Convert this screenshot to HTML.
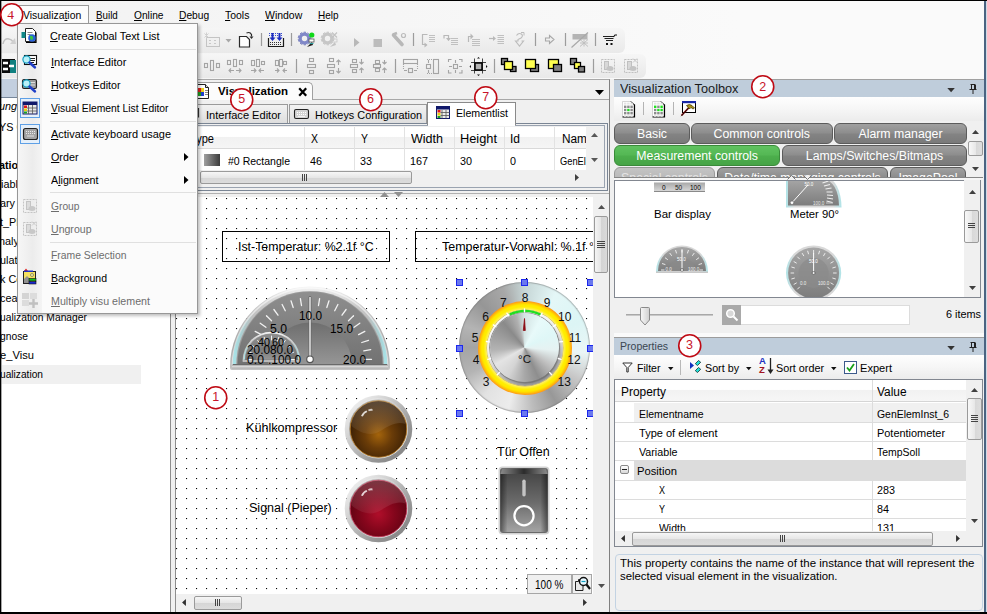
<!DOCTYPE html>
<html><head><meta charset="utf-8"><title>Visualization</title>
<style>
html,body{margin:0;padding:0;}
body{width:987px;height:614px;overflow:hidden;position:relative;background:#f0f0f0;font-family:"Liberation Sans",sans-serif;font-size:12px;color:#000;}
.a{position:absolute;}
.t{transform-origin:0 50%;position:absolute;white-space:nowrap;line-height:16px;height:16px;}
u{text-decoration:underline;text-underline-offset:1px;}
svg{position:absolute;overflow:visible;}
.tb{position:absolute;height:20.400px;box-sizing:border-box;border:1px solid #5c5c5c;border-radius:6px;background:linear-gradient(#a0a0a0,#8e8e8e 45%,#838383 55%,#7a7a7a);color:#fff;font-size:12.3px;line-height:20px;text-align:center;white-space:nowrap;}
.tb.g{background:linear-gradient(#60c260,#55b855 45%,#4cae4c 55%,#46a446);border-color:#3a8a3a;}
.tb.d{background:linear-gradient(#c4c4c4,#b0b0b0);border-color:#999;color:#e4e4e4;}
.an{position:absolute;width:23.5px;height:23.5px;color:#c8142a;font-size:12.5px;line-height:23.5px;text-align:center;}
.an svg{left:0;top:0;}
.an span{position:absolute;left:0;top:.5px;width:23.5px;text-align:center;}
.pn{position:absolute;width:20px;height:16px;line-height:16px;text-align:center;font-size:12px;color:#111;}
.hd{position:absolute;width:7px;height:7px;box-sizing:border-box;border:1px solid #1c28ee;background:#6a78ee;}
</style></head>
<body>
<!-- top region background -->
<div class="a" style="left:0;top:0;width:987px;height:80px;background:linear-gradient(90deg,#f3f3f3,#f6f6f6 40%,#fafafa 75%)"></div>
<!-- menu bar -->

<!-- toolbar strips -->
<div class="a" style="left:1px;top:28px;width:624px;height:25px;background:linear-gradient(#f6f6f6,#eeeeee 60%,#e9e9e9);border-radius:0 6px 6px 0"></div>
<div class="a" style="left:1px;top:54px;width:645px;height:24px;background:linear-gradient(#f6f6f6,#eeeeee 60%,#e9e9e9);border-radius:0 6px 6px 0"></div>
<!-- menu bar items -->
<div class="a" style="left:17px;top:5px;width:72px;height:19px;border:1px solid #9a9a9a;border-bottom:none;background:#fcfcfc;box-sizing:border-box"></div>
<span class="t" style="left:22.7px;top:7px;font-size:11.5px;transform:scaleX(0.905);">Visualiza<u>t</u>ion</span>
<span class="t" style="left:96.4px;top:7px;font-size:11.5px;transform:scaleX(0.852);"><u>B</u>uild</span>
<span class="t" style="left:133.5px;top:7px;font-size:11.5px;transform:scaleX(0.887);"><u>O</u>nline</span>
<span class="t" style="left:178.8px;top:7px;font-size:11.5px;transform:scaleX(0.891);"><u>D</u>ebug</span>
<span class="t" style="left:225px;top:7px;font-size:11.5px;transform:scaleX(0.908);"><u>T</u>ools</span>
<span class="t" style="left:264.7px;top:7px;font-size:11.5px;transform:scaleX(0.911);"><u>W</u>indow</span>
<span class="t" style="left:317.7px;top:7px;font-size:11.5px;transform:scaleX(0.866);"><u>H</u>elp</span>
<!-- toolbar icons row 1 (center y=40.500) -->
<svg style="left:0;top:0" width="987" height="80">
<g fill="none" stroke="#b4b4b4" stroke-width="1">
 <!-- redo (left, partially hidden) -->
 <path d="M3 44q1-6 6-5q3 .5 4 3" stroke="#c0c0c0" stroke-width="1.500"/><path d="M10 44l6 0l-1-6z" fill="#d0d0d0" stroke="none"/>
 <!-- new element disabled -->
 <rect x="206.500" y="37.500" width="13" height="9" stroke="#c4c4c4"/><path d="M209 40.500h2M214 40.500h2M209 43.500h2M214 43.500h2" stroke="#c8c8c8"/><path d="M204.500 33.500l4 4M208.500 33.500l-4 4M206.500 32.500v6" stroke="#d0d0d0"/>
 <path d="M225.500 39h6l-3 3.500z" fill="#a8a8a8" stroke="none"/>
 <!-- page with arrow -->
 <path d="M239.500 36.500h7l3 3v7.500h-10z" fill="#fff" stroke="#2a2a2a" stroke-width="1.200"/><path d="M246.500 33q3.500-1.500 5 1.500v2" stroke="#2a2a2a" stroke-width="1.200"/><path d="M249.500 36.500l2 2.500l2-2.500z" fill="#2a2a2a" stroke="none"/>
 <path d="M261.500 33v13M291.500 33v13M413.500 33v13M535.500 33v13M565.500 33v13M595.500 33v13" stroke="#9c9c9c" stroke-width="1.200"/>
 <!-- download -->
 <path d="M269 33.500h14M269 35.500h14" stroke="#3a50d0" stroke-dasharray="1 1"/><path d="M272.500 33v5M279.500 33v5" stroke="#1c2cc0" stroke-width="2"/><path d="M269.500 37.500h6l-3 3.500zM276.500 37.500h6l-3 3.500z" fill="#1c2cc0" stroke="none"/>
 <path d="M268.500 38v8.500h15v-8.500" stroke="#1a1a1a" stroke-width="1.200"/><path d="M270 42.500h12M270 44.500h12" stroke="#333" stroke-dasharray="1 1"/>
 <!-- gear green -->
 <circle cx="304.500" cy="38.500" r="4.300" stroke="#8088c8" stroke-width="3.200"/><circle cx="304.500" cy="38.500" r="6.300" stroke="#6870b8" stroke-width="1" stroke-dasharray="2.500 1.500"/>
 <circle cx="311.800" cy="35" r="2.600" fill="#10d818" stroke="none"/><rect x="309" y="39" width="5" height="3" fill="#fff" stroke="#555" stroke-width=".8"/><path d="M307 47l5-5l1 3z" fill="#222" stroke="none"/><path d="M309.500 43.500h4" stroke="#30a0a0"/>
 <!-- gear disabled -->
 <circle cx="327.500" cy="38.500" r="4.300" stroke="#c6c6c6" stroke-width="3.200"/><circle cx="327.500" cy="38.500" r="6.300" stroke="#c0c0c0" stroke-width="1" stroke-dasharray="2.500 1.500"/>
 <path d="M332 32.500l5 5M337 32.500l-5 5" stroke="#c4c4c4" stroke-width="1.300"/><rect x="332" y="39" width="5" height="3" stroke="#c8c8c8" stroke-width=".8"/><path d="M330 47l5-5l1 3z" fill="#c4c4c4" stroke="none"/>
 <!-- play / stop -->
 <path d="M354 38l5.500 4.500l-5.500 4.500z" fill="#b8b8b8" stroke="none"/>
 <rect x="373.500" y="39" width="8.500" height="8" fill="#bcbcbc" stroke="none"/>
 <!-- wrench -->
 <path d="M393.500 35l8.500 9.500" stroke="#b8b8b8" stroke-width="3.600" stroke-linecap="round"/><path d="M393 34.500l4-1.500" stroke="#b8b8b8" stroke-width="2.500"/><circle cx="403.500" cy="35.500" r="2" stroke="#bcbcbc" stroke-width="1.200"/>
 <!-- step into -->
 <path d="M427.500 34.500h-5v10h4" stroke="#b8b8b8" stroke-width="1.200"/><path d="M424.500 42.500l3 2.500l-3 2.500" fill="#b8b8b8" stroke="none"/><path d="M429 35.500h6M429 37.500h6M429 39.500h6M429 41.500h6" stroke="#c0c0c0"/>
 <!-- step over -->
 <path d="M448.500 40.500v-5h-4.500v3" stroke="#b8b8b8" stroke-width="1.200"/><path d="M446 38l2.500 3l2.500-3z" fill="#b8b8b8" stroke="none"/><path d="M451 38.500h7M451 40.500h7M451 42.500h7M451 44.500h7" stroke="#c0c0c0"/>
 <!-- step out -->
 <path d="M468.500 42v-5.500h3" stroke="#b8b8b8" stroke-width="1.200"/><path d="M470.500 33.500l3 3l-3 3z" fill="#b8b8b8" stroke="none"/><path d="M472 39.500h8M472 41.500h8M472 43.500h8M472 45.500h8" stroke="#c0c0c0"/>
 <!-- run to cursor -->
 <path d="M489 38.500h5" stroke="#b8b8b8" stroke-width="1.200"/><path d="M493 36l3 2.500l-3 2.500z" fill="#b8b8b8" stroke="none"/><path d="M497.500 35.500h6.500M497.500 37.500h6.500M497.500 39.500h6.500M497.500 41.500h6.500M497.500 43.500h6.500" stroke="#c0c0c0"/>
 <!-- curvy arrow -->
 <path d="M516.500 35.500q2-3 5-1.500q2 2-.5 4l-3 1.500v1.500h-2.500l4 5l4-5h-2" stroke="#bcbcbc" stroke-width="1.100"/><path d="M521 32.500l3 0l0 3" stroke="#bcbcbc"/>
 <!-- arrow outline -->
 <path d="M545.500 38h4v-2.500l4.500 4l-4.500 4v-2.500h-4z" stroke="#a8a8a8" stroke-width="1.100"/>
 <!-- flag disabled -->
 <rect x="572.500" y="34" width="15" height="5.500" fill="#b4b4b4" stroke="none"/><path d="M580 39.500l8 7M584 39.500v7M580 43h8M588 39.500l-8 7" stroke="#c0c0c0"/><path d="M571.500 47.500l16.500-15" stroke="#a8a8a8" stroke-width="1.200"/>
 <!-- cart -->
 <path d="M603 36.500h11M604.500 38.500h9M606 40.500h7" stroke="#222" stroke-width="1"/><path d="M613.500 37l1.500-2h2" stroke="#111" stroke-width="1.100"/><rect x="606" y="43" width="2" height="2" fill="#111" stroke="none"/><rect x="610.500" y="43" width="2" height="2" fill="#111" stroke="none"/>
</g>
<!-- row 2 (center y=66) -->
<g fill="none" stroke="#a4a4a4" stroke-width="1.100">
 <!-- left hidden icon -->
 <rect x="2" y="59" width="13" height="14" fill="#0a0a0a" stroke="none"/><rect x="10" y="60" width="6" height="13" fill="#108080" stroke="none"/><path d="M3 63h5M3 69h5M9 66h5" stroke="#fff" stroke-width="2.500"/>
 <rect x="204.500" y="63.500" width="3" height="4"/><rect x="210.500" y="60.500" width="3" height="10"/><rect x="216.500" y="63.500" width="3" height="4"/>
 <rect x="227.500" y="60.500" width="3" height="4"/><rect x="233.500" y="59.500" width="3" height="7"/><rect x="239.500" y="60.500" width="3" height="4"/><path d="M229 70.500h5M236 70.500h5M231 68.500l-2 2l2 2M239 68.500l2 2l-2 2"/>
 <rect x="251.500" y="60.500" width="3" height="5"/><rect x="256.500" y="59.500" width="3" height="7"/><rect x="261.500" y="61.500" width="3" height="3"/><path d="M251 70.500h5M259 70.500h5M254 68.500l2 2l-2 2M261 68.500l-2 2l2 2"/>
 <rect x="275.500" y="60.500" width="3" height="5"/><rect x="279.500" y="59.500" width="3" height="7"/><rect x="283.500" y="61.500" width="3" height="3"/><path d="M275 70.500h4M283 70.500h4M277 68.500l2 2l-2 2M285 68.500l-2 2l2 2"/>
 <path d="M296.500 59v14M395.500 59v14M494.500 59v14M593.500 59v14" stroke="#9c9c9c" stroke-width="1.200"/>
 <rect x="309.500" y="58.500" width="4" height="3"/><rect x="307.500" y="64.500" width="8" height="3"/><rect x="309.500" y="70.500" width="4" height="3"/>
 <rect x="329.500" y="58.500" width="4" height="3"/><rect x="327.500" y="64.500" width="7" height="3"/><rect x="329.500" y="70.500" width="4" height="3"/><path d="M338.500 60v5M338.500 68v5M336.500 62l2-2l2 2M336.500 71l2 2l2-2"/>
 <rect x="352.500" y="59.500" width="4" height="3"/><rect x="350.500" y="64.500" width="7" height="3"/><rect x="352.500" y="69.500" width="4" height="3"/><path d="M361.500 59v5M361.500 68v5M359.500 62l2 2l2-2M359.500 70l2-2l2 2"/>
 <rect x="375.500" y="60.500" width="4" height="3"/><rect x="373.500" y="64.500" width="7" height="3"/><rect x="375.500" y="68.500" width="4" height="3"/><path d="M384.500 60v4M384.500 68v5M382.500 62l2 2l2-2M382.500 70l2-2l2 2"/>
 <rect x="403.500" y="59.500" width="14" height="4"/><rect x="408.500" y="68.500" width="4" height="4"/><path d="M403.500 64v6M417.500 64v6" stroke-dasharray="1 1"/><path d="M404 70.500h3M414 70.500h3"/>
 <rect x="433.500" y="59.500" width="5" height="14"/><rect x="426.500" y="64.500" width="4" height="4"/><path d="M427 59.500h6M427 73.500h6" stroke-dasharray="1 1"/><path d="M428.500 60v3M428.500 70v3"/>
 <path d="M448.500 62v-2.500h3M459 59.500h3v2.500M462 70v3h-3M451.500 73h-3v-3" /><rect x="453.500" y="64.500" width="4" height="4"/><path d="M455.500 60v3M455.500 70v3M449 66.500h3M459 66.500h3"/>
 <!-- fit frame (enabled) -->
 <path d="M474.500 58.500v15M482.500 58.500v15M471 62.500h15M471 70.500h15" stroke="#333" stroke-width=".9"/><rect x="475" y="63" width="7" height="7" fill="#b4b4b4" stroke="#000" stroke-width="1.500"/><path d="M477 58.500h3l-1.500-1.500zM477 74.500h3l-1.500 1.500zM471 65v3l-1.500-1.500zM486 65v3l1.500-1.500z" fill="#111" stroke="none"/>
</g>
<!-- order icons -->
<g stroke="#000" stroke-width="1.300">
 <rect x="501.500" y="58.500" width="6" height="6" fill="#808080"/><rect x="510.500" y="66.500" width="5.500" height="5" fill="#808080"/><rect x="504.500" y="61.500" width="8" height="8" fill="#ffff50"/>
 <rect x="530.500" y="64.500" width="8" height="7" fill="#808080"/><rect x="525.500" y="59.500" width="10" height="9" fill="#ffff50"/>
 <rect x="548.500" y="59.500" width="10" height="9" fill="#ffff50"/><rect x="553.500" y="64.500" width="8" height="7" fill="#808080"/>
 <rect x="570.500" y="58.500" width="6" height="6" fill="#808080"/><rect x="574.500" y="62.500" width="6" height="6" fill="#ffff50"/><rect x="578.500" y="66.500" width="6" height="5.500" fill="#808080"/>
</g>
<!-- group / ungroup disabled -->
<g fill="none" stroke="#c0c0c0">
 <rect x="601.500" y="59.500" width="13" height="13" stroke-dasharray="2 1"/><rect x="604.500" y="61.500" width="4" height="8" fill="#d8d8d8"/><ellipse cx="610" cy="68.500" rx="3.500" ry="2.500" fill="#c4c4c4" stroke="none"/>
 <rect x="624.500" y="59.500" width="13" height="13" stroke-dasharray="2 1"/><rect x="627.500" y="61.500" width="4" height="8" fill="#d8d8d8"/><ellipse cx="633" cy="68.500" rx="3.500" ry="2.500" fill="#c4c4c4" stroke="none"/><path d="M633 58.500l4 4M637 58.500l-4 4" stroke="#c8c8c8"/>
</g>
</svg>
<!-- left panel -->
<div class="a" style="left:1px;top:79px;width:170px;height:533px;background:#fff"></div>
<div class="a" style="left:1px;top:79px;width:170px;height:18px;background:#c3cfdf"></div><div class="a" style="left:1px;top:97px;width:170px;height:1px;background:#76869a"></div>
<div class="a" style="left:2px;top:365px;width:139px;height:19px;background:#f0f0f0"></div>
<span class="t" style="left:-1px;top:98px;font-size:11.5px;transform:scaleX(0.94);font-style:italic">ung</span>
<span class="t" style="left:-1px;top:119px;font-size:11.5px;transform:scaleX(0.94);">YS C</span>
<span class="t" style="left:-1px;top:157px;font-size:11.5px;transform:scaleX(0.94);font-weight:bold">ation</span>
<span class="t" style="left:1px;top:176px;font-size:11.5px;transform:scaleX(0.94);">iable</span>
<span class="t" style="left:0px;top:195px;font-size:11.5px;transform:scaleX(0.94);">ary</span>
<span class="t" style="left:0px;top:214px;font-size:11.5px;transform:scaleX(0.94);">t_PRG</span>
<span class="t" style="left:-1px;top:233px;font-size:11.5px;transform:scaleX(0.94);">nalyse</span>
<span class="t" style="left:0px;top:252px;font-size:11.5px;transform:scaleX(0.94);">ulation</span>
<span class="t" style="left:0px;top:271px;font-size:11.5px;transform:scaleX(0.94);">k Config</span>
<span class="t" style="left:0px;top:290px;font-size:11.5px;transform:scaleX(0.94);">ceanu</span>
<span class="t" style="left:0px;top:309px;font-size:11.5px;transform:scaleX(0.895);">ualization Manager</span>
<span class="t" style="left:0px;top:328px;font-size:11.5px;transform:scaleX(0.893);">gnose</span>
<span class="t" style="left:0px;top:347px;font-size:11.5px;transform:scaleX(0.972);">e_Visu</span>
<span class="t" style="left:0px;top:366px;font-size:11.5px;transform:scaleX(0.885);">ualization</span>
<!-- splitter left/center -->
<div class="a" style="left:170px;top:79px;width:1px;height:533px;background:#8e8e8e"></div>
<div class="a" style="left:171px;top:79px;width:4px;height:533px;background:#f0f0f0"></div>
<!-- center frame -->
<div class="a" style="left:175px;top:79px;width:435px;height:533px;background:#f0f0f0;border-top:1px solid #a8a8a8;border-left:1px solid #8e8e8e;border-right:1px solid #808080;box-sizing:border-box"></div>
<!-- doc tab -->
<div class="a" style="left:176px;top:99px;width:433px;height:1px;background:#a8a8a8"></div>
<div class="a" style="left:190px;top:82px;width:123px;height:18px;background:#fcfcfc;border:1px solid #a0a0a0;border-bottom:none;border-radius:0 5px 0 0;box-sizing:border-box"></div>
<svg style="left:196px;top:83px" width="14" height="16" viewBox="0 0 14 16"><path d="M1.500 1.500h8l3 3v11h-11z" fill="#fff" stroke="#222" stroke-width="1"/><path d="M9.500 1.500v3h3" fill="#ddd" stroke="#222" stroke-width="1"/><rect x="2" y="5" width="3" height="4" fill="#e02020"/><rect x="5" y="5" width="3" height="4" fill="#f0d020"/><rect x="2" y="9" width="3" height="4" fill="#20a020"/><rect x="5" y="9" width="3" height="4" fill="#2040d0"/><path d="M9 7.500h3M9 9.500h3M9 11.500h3" stroke="#888" stroke-width="1"/></svg>
<span class="t" style="left:218px;top:83px;font-size:11.5px;transform:scaleX(0.999);font-weight:bold">Visualization</span>
<svg style="left:298px;top:87px" width="10" height="10" viewBox="0 0 10 10"><path d="M1.2 1.2L8.2 8.8M8.2 1.2L1.2 8.8" stroke="#000" stroke-width="2.2"/></svg>
<svg style="left:595px;top:90px" width="10" height="6" viewBox="0 0 10 6"><path d="M0 0h9L4.5 5z" fill="#000"/></svg>
<!-- sub tabs -->
<div class="a" style="left:176px;top:104px;width:112px;height:20px;background:linear-gradient(#f2f2f2,#dedede);border:1px solid #9a9a9a;box-sizing:border-box"></div>
<div class="a" style="left:289px;top:104px;width:138px;height:20px;background:linear-gradient(#f2f2f2,#dedede);border:1px solid #9a9a9a;box-sizing:border-box"></div>
<span class="t" style="left:206px;top:107px;font-size:11.5px;transform:scaleX(0.962);">Interface Editor</span>
<span class="t" style="left:315px;top:107px;font-size:11.5px;transform:scaleX(0.946);">Hotkeys Configuration</span>
<!-- content frame -->
<div class="a" style="left:176px;top:123px;width:432px;height:68px;background:#f0f0f0;border:1px solid #7a8594;border-left:none;box-sizing:border-box"></div>
<div class="a" style="left:176px;top:125px;width:429px;height:63px;background:#f0f0f0;border:1px solid #9aa3b0;border-left:none;box-sizing:border-box"></div>
<!-- selected tab -->
<div class="a" style="left:427px;top:102px;width:89px;height:23px;background:#fff;border:1px solid #8a8a8a;border-bottom:none;box-sizing:border-box"></div>
<div class="a" style="left:428px;top:123px;width:87px;height:3px;background:#fff"></div>
<span class="t" style="left:456px;top:105px;font-size:11.5px;transform:scaleX(0.924);">Elementlist</span>
<!-- table -->
<div class="a" style="left:176px;top:127px;width:411px;height:43px;background:#fff"></div>
<div class="a" style="left:176px;top:127px;width:411px;height:22px;background:linear-gradient(#fff 0,#fff 45%,#f1f1f1 50%,#f5f5f5 100%);border-bottom:1px solid #d9d9d9;box-sizing:border-box"></div>
<div class="a" style="left:304px;top:127px;width:1px;height:43px;background:#e2e2e2"></div>
<div class="a" style="left:354px;top:127px;width:1px;height:43px;background:#e2e2e2"></div>
<div class="a" style="left:404px;top:127px;width:1px;height:43px;background:#e2e2e2"></div>
<div class="a" style="left:454px;top:127px;width:1px;height:43px;background:#e2e2e2"></div>
<div class="a" style="left:504px;top:127px;width:1px;height:43px;background:#e2e2e2"></div>
<div class="a" style="left:554px;top:127px;width:1px;height:43px;background:#e2e2e2"></div>
<span class="t" style="left:190px;top:131px;font-size:12px;transform:scaleX(0.923);">Type</span>
<span class="t" style="left:311px;top:131px;font-size:12px;transform:scaleX(0.873);">X</span>
<span class="t" style="left:361px;top:131px;font-size:12px;transform:scaleX(0.873);">Y</span>
<span class="t" style="left:411px;top:131px;font-size:12px;transform:scaleX(1.043);">Width</span>
<span class="t" style="left:460px;top:131px;font-size:12px;transform:scaleX(1.067);">Height</span>
<span class="t" style="left:510px;top:131px;font-size:12px;transform:scaleX(0.998);">Id</span>
<span class="t" style="left:561.5px;top:131px;font-size:12px;transform:scaleX(0.984);">Name</span>
<div class="a" style="left:204px;top:154px;width:16px;height:12px;background:linear-gradient(90deg,#a0a0a0,#3c3c3c)"></div>
<span class="t" style="left:228px;top:153px;font-size:11.5px;transform:scaleX(0.915);">#0 Rectangle</span>
<span class="t" style="left:310px;top:153px;font-size:11.5px;transform:scaleX(0.938);">46</span>
<span class="t" style="left:360px;top:153px;font-size:11.5px;transform:scaleX(0.938);">33</span>
<span class="t" style="left:410px;top:153px;font-size:11.5px;transform:scaleX(0.938);">167</span>
<span class="t" style="left:460px;top:153px;font-size:11.5px;transform:scaleX(0.938);">30</span>
<span class="t" style="left:510px;top:153px;font-size:11.5px;transform:scaleX(0.937);">0</span>
<div class="a" style="left:555px;top:127px;width:31px;height:43px;overflow:hidden"><span class="t" style="left:4.500px;top:26px;font-size:11.500px;transform:scaleX(.81)">GenElemInst_0</span></div>
<!-- table scrollbars -->
<div class="a" style="left:586px;top:127px;width:16px;height:43px;background:#f0f0f0"></div>
<svg style="left:591px;top:133px" width="7" height="4" viewBox="0 0 7 4"><path d="M0 4L3.500 0L7 4z" fill="#585858"/></svg>
<svg style="left:591px;top:158px" width="7" height="4" viewBox="0 0 7 4"><path d="M0 0L3.500 4L7 0z" fill="#585858"/></svg>
<div class="a" style="left:176px;top:170px;width:426px;height:15px;background:#f0f0f0"></div>
<div class="a" style="left:200px;top:171px;width:212px;height:13px;background:linear-gradient(#f6f6f6,#e6e6e6 50%,#d6d6d6 52%,#dcdcdc);border:1px solid #9a9a9a;border-radius:2px;box-sizing:border-box"></div>
<div class="a" style="left:302px;top:174px;width:1px;height:7px;background:#444;box-shadow:2px 0 0 #444,4px 0 0 #444"></div>
<svg style="left:575px;top:174px" width="4" height="7" viewBox="0 0 4 7"><path d="M0 0L4 3.500L0 7z" fill="#404040"/></svg>
<!-- splitter -->
<div class="a" style="left:176px;top:193px;width:433px;height:1px;background:#b0b0b0"></div>
<svg style="left:376px;top:192px" width="34" height="5" viewBox="0 0 34 5"><path d="M4 5L8.500 0L13 5z" fill="#909090"/><path d="M18 0L22.5 5L27 0z" fill="#909090"/></svg>
<!-- sub tab icons -->
<svg style="left:170px;top:100px" width="280" height="26">
<rect x="124.500" y="9.500" width="14" height="9" rx="1.500" fill="#d4d4d4" stroke="#222" stroke-width="1.100"/><path d="M127 12.500h9M127 14.500h9" stroke="#fff" stroke-width="1" stroke-dasharray="1 1"/><path d="M128 16.500h7" stroke="#f4f4f4" stroke-width="1"/>
<rect x="266.500" y="6.500" width="13" height="12" fill="#ececec" stroke="#10186a" stroke-width="1"/><rect x="266.500" y="6.500" width="13" height="3" fill="#10186a"/>
<rect x="267.500" y="10" width="3" height="2.500" fill="#e01818"/><rect x="267.500" y="13" width="3" height="2.500" fill="#e8d010"/><rect x="267.500" y="16" width="3" height="2" fill="#18a028"/>
<path d="M272 10v8.500M276 10v8.500M270.500 12.500h9M270.500 15.500h9" stroke="#555" stroke-width=".8"/>
<path d="M28.300 8v9.500" stroke="#333" stroke-width="1.600"/>
</svg>
<!-- canvas -->
<div class="a" style="left:176px;top:197px;width:417px;height:397px;background:#fff;overflow:hidden">
<div class="a" style="left:-176px;top:-197px;width:987px;height:614px">
<svg style="left:0;top:0" width="987" height="614"><defs><pattern id="dots" x="176" y="198" width="10" height="10" patternUnits="userSpaceOnUse"><rect x="0" y="0" width="1.1" height="1.1" fill="#000"/></pattern></defs><rect x="176" y="197" width="420" height="400" fill="url(#dots)"/></svg>
<!-- rectangles -->
<div class="a" style="left:222px;top:231px;width:168px;height:31px;border:1px solid #000;box-sizing:border-box"></div>
<div class="a" style="left:415px;top:231px;width:190px;height:31px;border:1px solid #000;box-sizing:border-box"></div>
<span class="t" style="left:237.6px;top:239px;font-size:12px;transform:scaleX(1.031);">Ist-Temperatur: %2.1f °C</span>
<span class="t" style="left:441.6px;top:239px;font-size:12px;transform:scaleX(1.040);">Temperatur-Vorwahl: %.1f °C</span>
<span class="t" style="left:246px;top:420px;font-size:12px;transform:scaleX(1.052);">Kühlkompressor</span>
<span class="t" style="left:248.7px;top:500px;font-size:12px;transform:scaleX(1.043);">Signal (Pieper)</span>
<span class="t" style="left:496.8px;top:444px;font-size:12px;transform:scaleX(1.042);">Tür Offen</span>
<!--METER-->
<!--POTI-->
<!--LAMPS-->
<!--SWITCH-->
</div></div>
<!-- canvas scrollbars -->
<div class="a" style="left:593px;top:197px;width:16px;height:397px;background:#f0f0f0"></div>
<svg style="left:598px;top:204.5px" width="7" height="4" viewBox="0 0 9 5"><path d="M0 5L4.5 0L9 5z" fill="#505050"/></svg>
<div class="a" style="left:594px;top:216px;width:14px;height:57px;background:linear-gradient(90deg,#f4f4f4,#e4e4e4 50%,#d4d4d4 52%,#dadada);border:1px solid #9a9a9a;border-radius:2px;box-sizing:border-box"></div>
<div class="a" style="left:597px;top:241px;width:8px;height:1px;background:#444;box-shadow:0 2px 0 #444,0 4px 0 #444,0 6px 0 #444"></div>
<svg style="left:598px;top:583.5px" width="7" height="4" viewBox="0 0 9 5"><path d="M0 0L4.5 5L9 0z" fill="#505050"/></svg>
<div class="a" style="left:176px;top:594px;width:433px;height:18px;background:#f0f0f0"></div>
<svg style="left:181.5px;top:599px" width="4" height="7" viewBox="0 0 5 9"><path d="M5 0L0 4.5L5 9z" fill="#303030"/></svg>
<div class="a" style="left:194px;top:596px;width:48px;height:14px;background:linear-gradient(#f6f6f6,#e6e6e6 50%,#d6d6d6 52%,#dcdcdc);border:1px solid #9a9a9a;border-radius:2px;box-sizing:border-box"></div>
<div class="a" style="left:215px;top:599px;width:1px;height:7px;background:#444;box-shadow:2px 0 0 #444,4px 0 0 #444"></div>
<svg style="left:582.5px;top:599px" width="4" height="7" viewBox="0 0 5 9"><path d="M0 0L5 4.5L0 9z" fill="#303030"/></svg>
<!-- zoom box -->
<div class="a" style="left:527px;top:574px;width:45px;height:20px;background:#f0f0f0;border:1px solid #a6a6a6;box-sizing:border-box"></div>
<div class="a" style="left:572px;top:574px;width:20px;height:20px;background:#f0f0f0;border:1px solid #a6a6a6;box-sizing:border-box"></div>
<span class="t" style="left:534.5px;top:576.5px;font-size:12px;transform:scaleX(0.837);">100 %</span>
<svg style="left:574px;top:576px" width="17" height="17" viewBox="0 0 17 17"><path d="M1.5 5.500h3l0-2h4.500v11h-7.500z" fill="#e8e8e8" stroke="#222"/><circle cx="9.500" cy="5.500" r="4" fill="#e8f8ff" stroke="#111" stroke-width="1.500"/><path d="M12.500 8.500L16 13" stroke="#111" stroke-width="2.200"/><path d="M7.500 5.500h4" stroke="#10a0c0" stroke-width="1.200"/></svg>
<!-- gauges overlay (clipped to canvas) -->
<div class="a" style="left:176px;top:197px;width:417px;height:397px;overflow:hidden">
<div class="a" style="left:-176px;top:-197px;width:987px;height:614px">
<!-- METER -->
<svg style="left:0;top:0" width="987" height="614">
<defs>
<linearGradient id="mbez" x1="0" y1="0" x2="0" y2="1"><stop offset="0" stop-color="#f4f4f4"/><stop offset=".25" stop-color="#c8c8c8"/><stop offset=".7" stop-color="#a8a8a8"/><stop offset="1" stop-color="#c4c4c4"/></linearGradient>
<linearGradient id="mcy" x1="0" y1="0" x2="1" y2="0"><stop offset="0" stop-color="#a8e4e8" stop-opacity=".95"/><stop offset=".12" stop-color="#a8e4e8" stop-opacity="0"/><stop offset=".88" stop-color="#a8e4e8" stop-opacity="0"/><stop offset="1" stop-color="#a8e4e8" stop-opacity=".95"/></linearGradient>
<linearGradient id="mface" x1="0" y1="0" x2="0" y2="1"><stop offset="0" stop-color="#8e8e8e"/><stop offset="1" stop-color="#727272"/></linearGradient>
<linearGradient id="minner" x1="0" y1="0" x2="0" y2="1"><stop offset="0" stop-color="#6e6e6e"/><stop offset="1" stop-color="#969696"/></linearGradient>
<linearGradient id="mbase" x1="0" y1="0" x2="0" y2="1"><stop offset="0" stop-color="#9a9a9a"/><stop offset=".5" stop-color="#d8d8d8"/><stop offset="1" stop-color="#b0b0b0"/></linearGradient>
<clipPath id="mclip"><rect x="225" y="280" width="170" height="86"/></clipPath>
<g id="meterg">
 <path d="M230 368v-1.500a80 80 0 0 1 160 0v1.500q0 2-2 2h-156q-2 0-2-2z" fill="url(#mbez)"/>
 <path d="M232.500 365.500a77.500 77.500 0 0 1 155 0" fill="none" stroke="#fff" stroke-opacity=".55" stroke-width="1.600"/>
 <path d="M234.500 365a75.500 75.500 0 0 1 151 0" fill="none" stroke="url(#mcy)" stroke-width="3.500"/>
 <path d="M236.500 365a73.500 73.800 0 0 1 147 0z" fill="#989898"/>
 <path d="M237.500 364.500a72.500 72.500 0 0 1 145 0z" fill="url(#mface)"/>
 <path d="M268 364.500a42 42 0 0 1 84 0z" fill="url(#minner)"/>
 <rect x="232" y="364.500" width="156" height="4" fill="url(#mbase)"/>
 <rect x="233" y="364" width="154" height="1" fill="#6a6a6a"/>
</g>
</defs>
<use href="#meterg"/>
<g stroke="#f2f2f2" stroke-width="1.300" stroke-linecap="round" id="mticks">
<path d="M255.5 359.3L248.5 359.3"/><path d="M256.2 350.8L249.3 349.7"/><path d="M258.2 342.5L251.5 340.3"/><path d="M261.4 334.6L255.2 331.4"/><path d="M265.9 327.3L260.2 323.2"/><path d="M271.5 320.8L266.5 315.8"/><path d="M278.0 315.2L273.9 309.5"/><path d="M285.3 310.7L282.1 304.5"/><path d="M293.2 307.5L291.0 300.8"/><path d="M301.5 305.5L300.4 298.6"/><path d="M310.0 304.8L310.0 297.8"/><path d="M318.5 305.5L319.6 298.6"/><path d="M326.8 307.5L329.0 300.8"/><path d="M334.7 310.7L337.9 304.5"/><path d="M342.0 315.2L346.1 309.5"/><path d="M348.5 320.8L353.5 315.8"/><path d="M354.1 327.3L359.8 323.2"/><path d="M358.6 334.6L364.8 331.4"/><path d="M361.8 342.5L368.5 340.3"/><path d="M363.8 350.8L370.7 349.7"/><path d="M364.5 359.3L371.5 359.3"/>
</g>
<path d="M310 359V297.500" stroke="#626262" stroke-width="2.800" stroke-linecap="round"/>
<path d="M310 359V297.500" stroke="#f0f0f0" stroke-width="1.400" stroke-linecap="round"/>
<circle cx="310" cy="359.300" r="3.300" fill="#fff" stroke="#555" stroke-width="1.200"/>
<!-- small overlay meter -->
<g transform="translate(271.500 360.500) scale(.362) translate(-310 -366)"><use href="#meterg"/></g>
<g stroke="#f2f2f2" stroke-width="1" stroke-linecap="round">
<path d="M252.0 359.5L248.0 359.5"/><path d="M253.0 353.5L249.2 352.2"/><path d="M255.7 348.0L252.5 345.7"/><path d="M260.0 343.7L257.7 340.5"/><path d="M265.5 341.0L264.2 337.2"/><path d="M271.5 340.0L271.5 336.0"/><path d="M277.5 341.0L278.8 337.2"/><path d="M283.0 343.7L285.3 340.5"/><path d="M287.3 348.0L290.5 345.7"/><path d="M290.0 353.5L293.8 352.2"/><path d="M291.0 359.5L295.0 359.5"/>
</g>
</svg>
<span class="t" style="left:299px;top:307.5px;font-size:12px;transform:scaleX(0.985);">10.0</span>
<span class="t" style="left:270px;top:321px;font-size:12px;transform:scaleX(1.019);">5.0</span>
<span class="t" style="left:330px;top:321px;font-size:12px;transform:scaleX(0.985);">15.0</span>
<span class="t" style="left:343px;top:351.5px;font-size:12px;transform:scaleX(0.985);">20.0</span>
<span class="t" style="left:247px;top:351.5px;font-size:12px;transform:scaleX(1.019);">0.0</span>
<span class="t" style="left:268px;top:351.5px;font-size:12px;transform:scaleX(0.989);">.100.0</span>
<span class="t" style="left:247px;top:342px;font-size:12px;transform:scaleX(0.985);">20.0</span>
<span class="t" style="left:270px;top:342px;font-size:12px;transform:scaleX(0.985);">80.0</span>
<span class="t" style="left:258px;top:335px;font-size:10px;transform:scaleX(1.079);">40</span>
<span class="t" style="left:272px;top:335px;font-size:10px;transform:scaleX(1.079);">60</span>
</div></div>
<div class="a" style="left:176px;top:197px;width:417px;height:397px;overflow:hidden">
<div class="a" style="left:-176px;top:-197px;width:987px;height:614px">
<!-- POTENTIOMETER -->
<div class="a" style="left:459px;top:282px;width:131px;height:131px;border-radius:50%;background:conic-gradient(from 0deg,#c6d6d6 0deg,#e4f7f7 30deg,#dcf5f5 65deg,#eaf6f6 95deg,#c8c8c8 120deg,#989898 150deg,#bcbcbc 172deg,#ececec 195deg,#e2e2e2 220deg,#b4b4b4 245deg,#a4a4a4 270deg,#b4b4b4 290deg,#969696 315deg,#a8a8a8 340deg,#c6d6d6 360deg);box-shadow:inset 0 0 1px 1px rgba(120,120,120,.5)"></div>
<div class="a" style="left:477.500px;top:300.500px;width:94px;height:94px;border-radius:50%;background:radial-gradient(circle closest-side,#fff27a 0,#fff27a 81%,#fff040 84%,#ffee00 88%,#ffe800 92%,#ffcc00 95.500%,#ffa818 98%,#ff9a10 100%)"></div>
<div class="a" style="left:486.500px;top:309.500px;width:76px;height:76px;border-radius:50%;background:linear-gradient(160deg,#ffffff,#ececec 45%,#a8a8a8 80%,#888);box-shadow:0 0 0 .5px #c8b060"></div>
<div class="a" style="left:490px;top:313px;width:69px;height:69px;border-radius:50%;background:conic-gradient(from 0deg,#d4e4e4 0deg,#e8fafa 30deg,#dff7f7 65deg,#e6f2f2 95deg,#c0c0c0 125deg,#8e8e8e 155deg,#a8a8a8 180deg,#d4d4d4 210deg,#e4e4e4 240deg,#b4b4b4 265deg,#a0a0a0 290deg,#8a8a8a 320deg,#b0b0b0 345deg,#d4e4e4 360deg);box-shadow:0 0 0 .8px #808080,1px 1.500px 2px rgba(0,0,0,.35)"></div>
<svg style="left:0;top:0" width="987" height="614">
<g fill="none">
<path d="M509.500 314.500A36.500 36.500 0 0 1 541 314.800" stroke="#22dd22" stroke-width="2.200"/>
<g stroke="#fff" stroke-width="1.400" stroke-linecap="round" id="pticks"><path d="M499.4 372.6L497.3 374.7"/><path d="M490.7 358.5L487.9 359.4"/><path d="M489.4 341.9L486.5 341.5"/><path d="M495.8 326.6L493.4 324.9"/><path d="M508.4 315.9L507.0 313.2"/><path d="M524.5 312.0L524.5 309.0"/><path d="M540.6 315.9L542.0 313.2"/><path d="M553.2 326.6L555.6 324.9"/><path d="M559.6 341.9L562.5 341.5"/><path d="M558.3 358.5L561.1 359.4"/><path d="M549.6 372.6L551.7 374.7"/></g>
<path d="M524.500 318.500L523.300 330.500h2z" fill="#8c0c14" stroke="#8c0c14" stroke-width=".8"/>
</g>
</svg>
<span class="pn" style="left:515px;top:289.500px">8</span>
<span class="pn" style="left:493.300px;top:294.500px">7</span>
<span class="pn" style="left:537.200px;top:294.500px">9</span>
<span class="pn" style="left:475.700px;top:309.200px">6</span>
<span class="pn" style="left:554.800px;top:309.200px">10</span>
<span class="pn" style="left:465.200px;top:329.500px">5</span>
<span class="pn" style="left:565px;top:329.500px">11</span>
<span class="pn" style="left:466px;top:352.400px">4</span>
<span class="pn" style="left:564px;top:352.400px">12</span>
<span class="pn" style="left:476px;top:373.500px">3</span>
<span class="pn" style="left:554.300px;top:373.500px">13</span>
<span class="pn" style="left:514.500px;top:350.500px;font-size:11.500px">°C</span>
<!-- selection handles -->
<div class="hd" style="left:456px;top:279px"></div><div class="hd" style="left:521px;top:279px"></div><div class="hd" style="left:587px;top:279px"></div>
<div class="hd" style="left:456px;top:344.500px"></div><div class="hd" style="left:587px;top:344.500px"></div>
<div class="hd" style="left:456px;top:410px"></div><div class="hd" style="left:521px;top:410px"></div><div class="hd" style="left:587px;top:410px"></div>
</div></div>
<div class="a" style="left:176px;top:197px;width:417px;height:397px;overflow:hidden">
<div class="a" style="left:-176px;top:-197px;width:987px;height:614px">
<svg style="left:0;top:0" width="987" height="614">
<defs>
<linearGradient id="lring" x1="0" y1="0" x2="1" y2="1"><stop offset="0" stop-color="#ffffff"/><stop offset=".35" stop-color="#d0d0d0"/><stop offset=".7" stop-color="#969696"/><stop offset="1" stop-color="#7c7c7c"/></linearGradient>
<linearGradient id="lring2" x1="0" y1="0" x2="1" y2="1"><stop offset="0" stop-color="#8a8a8a"/><stop offset=".5" stop-color="#c4c4c4"/><stop offset="1" stop-color="#f4f4f4"/></linearGradient>
<radialGradient id="lbrown" cx=".5" cy=".6" r=".6"><stop offset="0" stop-color="#a4640c"/><stop offset=".4" stop-color="#6a3c08"/><stop offset="1" stop-color="#2e1804"/></radialGradient>
<radialGradient id="lred" cx=".5" cy=".6" r=".6"><stop offset="0" stop-color="#b00e2a"/><stop offset=".45" stop-color="#86061c"/><stop offset="1" stop-color="#560210"/></radialGradient>
<linearGradient id="lgl" x1="0" y1="0" x2="0" y2="1"><stop offset="0" stop-color="#fff" stop-opacity=".22"/><stop offset="1" stop-color="#fff" stop-opacity=".06"/></linearGradient>
<g id="lampbody">
 <circle cx="0" cy="0" r="33.800" fill="url(#lring)"/>
 <circle cx="0" cy="0" r="29.500" fill="url(#lring2)"/>
</g>
<g id="lampglass">
 <path d="M-27 -3A27 27 0 0 1 27 -5C18 -8 10 -3 2 2C-8 8 -18 4 -27 -3z" fill="url(#lgl)"/>
 <path d="M-17.500 -13q2-4.500 5.500-5.500l.8 1.600q-2.800 1-4.500 4.400z" fill="#fff" opacity=".8"/>
 <path d="M-10.500 -19.300q2.500-1.200 4.500-.8l0 2q-2 -.4-3.700 .4z" fill="#fff" opacity=".7"/>
</g>
</defs>
<g transform="translate(378.500 429)"><use href="#lampbody"/><circle r="28.300" fill="url(#lbrown)" stroke="#b87820" stroke-width=".8"/><use href="#lampglass"/></g>
<g transform="translate(378.500 508.500)"><use href="#lampbody"/><circle r="28.300" fill="url(#lred)" stroke="#c03050" stroke-width=".8"/><use href="#lampglass"/></g>
<!-- SWITCH -->
<defs>
<linearGradient id="swf" x1="0" y1="0" x2="0" y2="1"><stop offset="0" stop-color="#484848"/><stop offset=".5" stop-color="#6c6c6c"/><stop offset="1" stop-color="#a4a4a4"/></linearGradient>
<linearGradient id="swe" x1="0" y1="0" x2="1" y2="0"><stop offset="0" stop-color="#000" stop-opacity=".45"/><stop offset=".15" stop-color="#000" stop-opacity="0"/><stop offset=".85" stop-color="#000" stop-opacity="0"/><stop offset="1" stop-color="#000" stop-opacity=".45"/></linearGradient>
<linearGradient id="swt" x1="0" y1="0" x2="1" y2="0"><stop offset="0" stop-color="#8a8a8a"/><stop offset=".5" stop-color="#2c2c2c"/><stop offset="1" stop-color="#8a8a8a"/></linearGradient>
</defs>
<rect x="498.500" y="466.500" width="51" height="68" rx="4" fill="#d2d2d2"/>
<rect x="500" y="468" width="48" height="65" rx="3" fill="#6a6a6a"/>
<path d="M500.500 474l2-5.500h43l2 5.500z" fill="url(#swt)"/>
<path d="M500.500 474h47v55q0 3-3 3h-41q-3 0-3-3z" fill="url(#swf)"/>
<path d="M500.500 474h47v55q0 3-3 3h-41q-3 0-3-3z" fill="url(#swe)"/>
<rect x="522.300" y="479.500" width="3.400" height="17" rx="1.700" fill="#c4c4c4"/>
<circle cx="524" cy="515.700" r="9.600" fill="none" stroke="#fff" stroke-width="2.200"/>
</svg>
</div></div>
<!-- right panel -->
<div class="a" style="left:610px;top:79px;width:377px;height:533px;background:#f0f0f0"></div>
<div class="a" style="left:614px;top:79px;width:370px;height:1px;background:#a0a0a0"></div><div class="a" style="left:614px;top:80px;width:370px;height:17px;background:#bfcddb"></div>
<span class="t" style="left:620px;top:80.5px;font-size:12.5px;transform:scaleX(1.019);color:#1a1a1a">Visualization Toolbox</span>
<svg style="left:947px;top:87.500px" width="9" height="5" viewBox="0 0 10 6"><path d="M0 0h9L4.5 5z" fill="#333"/></svg>
<svg style="left:967.500px;top:83px" width="10" height="12" viewBox="0 0 10 12"><path d="M2.500 1.500h5M3.500 1.500v5M6.500 1.500v5M7.500 2v4.500M1.500 6.500h7M5 7v4" stroke="#222" stroke-width="1" fill="none"/></svg>
<!-- toolbox toolbar -->
<div class="a" style="left:614px;top:97px;width:370px;height:24px;background:linear-gradient(#fefefe,#f6f6f6 50%,#ececec)"></div>
<svg style="left:621px;top:100px" width="16" height="18" viewBox="0 0 16 18"><path d="M1.500 1.500h8.500l3 3v12h-11.500z" fill="#fff" stroke="#bbb" stroke-width=".6"/><path d="M13.500 4.500v12.500h-12" fill="none" stroke="#000" stroke-width="1.200"/><path d="M10 1.500l3.500 3.500" stroke="#000" stroke-width="1"/><rect x="3.0" y="5.6" width="2.400" height="2.400" fill="#8c8c8c"/><rect x="6.2" y="5.6" width="2.400" height="2.400" fill="#8c8c8c"/><rect x="9.4" y="5.6" width="2.400" height="2.400" fill="#8c8c8c"/><rect x="3.0" y="8.8" width="2.400" height="2.400" fill="#8c8c8c"/><rect x="6.2" y="8.8" width="2.400" height="2.400" fill="#20e020"/><rect x="9.4" y="8.8" width="2.400" height="2.400" fill="#8c8c8c"/><rect x="3.0" y="12.0" width="2.400" height="2.400" fill="#8c8c8c"/><rect x="6.2" y="12.0" width="2.400" height="2.400" fill="#8c8c8c"/><rect x="9.4" y="12.0" width="2.400" height="2.400" fill="#8c8c8c"/><rect x="3.0" y="2.600" width="2.400" height="2" fill="#e4e4e4"/><rect x="3.0" y="15.200" width="2.400" height="1.600" fill="#e4e4e4"/><rect x="6.2" y="2.600" width="2.400" height="2" fill="#e4e4e4"/><rect x="6.2" y="15.200" width="2.400" height="1.600" fill="#e4e4e4"/><rect x="9.4" y="2.600" width="2.400" height="2" fill="#e4e4e4"/><rect x="9.4" y="15.200" width="2.400" height="1.600" fill="#e4e4e4"/></svg>
<div class="a" style="left:643px;top:102px;width:1px;height:13px;background:#b4b4b4"></div>
<svg style="left:651px;top:100px" width="16" height="18" viewBox="0 0 16 18"><path d="M1.500 1.500h8.500l3 3v12h-11.500z" fill="#fff" stroke="#bbb" stroke-width=".6"/><path d="M13.500 4.500v12.500h-12" fill="none" stroke="#000" stroke-width="1.200"/><path d="M10 1.500l3.500 3.500" stroke="#000" stroke-width="1"/><rect x="3.0" y="5.6" width="2.400" height="2.400" fill="#20e020"/><rect x="6.2" y="5.6" width="2.400" height="2.400" fill="#8c8c8c"/><rect x="9.4" y="5.6" width="2.400" height="2.400" fill="#20e020"/><rect x="3.0" y="8.8" width="2.400" height="2.400" fill="#8c8c8c"/><rect x="6.2" y="8.8" width="2.400" height="2.400" fill="#20e020"/><rect x="9.4" y="8.8" width="2.400" height="2.400" fill="#20e020"/><rect x="3.0" y="12.0" width="2.400" height="2.400" fill="#8c8c8c"/><rect x="6.2" y="12.0" width="2.400" height="2.400" fill="#8c8c8c"/><rect x="9.4" y="12.0" width="2.400" height="2.400" fill="#8c8c8c"/><rect x="3.0" y="2.600" width="2.400" height="2" fill="#e4e4e4"/><rect x="3.0" y="15.200" width="2.400" height="1.600" fill="#e4e4e4"/><rect x="6.2" y="2.600" width="2.400" height="2" fill="#e4e4e4"/><rect x="6.2" y="15.200" width="2.400" height="1.600" fill="#e4e4e4"/><rect x="9.4" y="2.600" width="2.400" height="2" fill="#e4e4e4"/><rect x="9.4" y="15.200" width="2.400" height="1.600" fill="#e4e4e4"/></svg>
<div class="a" style="left:673px;top:102px;width:1px;height:13px;background:#b4b4b4"></div>
<svg style="left:680px;top:100px" width="18" height="18" viewBox="0 0 18 18"><rect x="2.500" y="1.500" width="13" height="11" fill="#fff" stroke="#000"/><rect x="2" y="1" width="14" height="2.200" fill="#1828a8"/><path d="M1.500 15.500L9 7.500" stroke="#7a1010" stroke-width="1.800"/><path d="M1 16.200L8.500 8.200" stroke="#000" stroke-width=".6"/><path d="M6.500 5.500q3-2 5.500 0l2.500 2.500l-1.500 1l-2-1.500l-1.500 1.500z" fill="#a89018" stroke="#3c3000" stroke-width=".7"/></svg>
<!-- category tabs -->
<div class="tb" style="left:614px;top:123.200px;width:76px">Basic</div>
<div class="tb" style="left:691px;top:123.200px;width:141.500px">Common controls</div>
<div class="tb" style="left:834px;top:123.200px;width:133px">Alarm manager</div>
<div class="tb g" style="left:614px;top:145.200px;width:166.300px">Measurement controls</div>
<div class="tb" style="left:782px;top:145.200px;width:185px">Lamps/Switches/Bitmaps</div>
<div class="a" style="left:614px;top:167.200px;width:353px;height:10px;overflow:hidden">
<div class="tb d" style="left:0;top:0;width:101px">Special controls</div>
<div class="tb" style="left:103px;top:0;width:171px">Date/time managing controls</div>
<div class="tb" style="left:276px;top:0;width:76px">ImagePool</div>
</div>
<!-- tabs scrollbar -->
<svg style="left:972px;top:129.5px" width="7" height="4" viewBox="0 0 9 5"><path d="M0 5L4.500 0L9 5z" fill="#404040"/></svg>
<div class="a" style="left:968px;top:141px;width:15px;height:15px;background:linear-gradient(90deg,#f8f8f8,#e8e8e8 50%,#d8d8d8 52%,#dedede);border:1px solid #9a9a9a;border-radius:2px;box-sizing:border-box"></div>
<svg style="left:972px;top:166.5px" width="7" height="4" viewBox="0 0 9 5"><path d="M0 0L4.500 5L9 0z" fill="#404040"/></svg>
<!-- splitter -->
<div class="a" style="left:614px;top:177px;width:369px;height:1px;background:#868686"></div><div class="a" style="left:614px;top:178px;width:369px;height:2px;background:#f6f6f6"></div>
<svg style="left:786px;top:174px" width="30" height="6" viewBox="0 0 30 6"><path d="M1.500 5.500L5.500 1.500L9.500 5.500" fill="#f0f0f0" stroke="#777" stroke-width="1"/><path d="M17.500 1.500L21.500 5.500L25.500 1.500" fill="#f0f0f0" stroke="#777" stroke-width="1"/></svg>
<!-- element list -->
<div class="a" style="left:614px;top:180px;width:367px;height:118px;background:#fff;border:1px solid #828790;box-sizing:border-box;overflow:hidden">
<svg style="left:-615px;top:-181px" width="987" height="614">
<defs>
<linearGradient id="tbar" x1="0" y1="0" x2="0" y2="1"><stop offset="0" stop-color="#a8a8a8"/><stop offset="1" stop-color="#dcdcdc"/></linearGradient>
<linearGradient id="tface" x1="0" y1="0" x2="0" y2="1"><stop offset="0" stop-color="#a6a6a6"/><stop offset="1" stop-color="#7c7c7c"/></linearGradient>
<linearGradient id="tbez" x1="0" y1="0" x2="1" y2="0"><stop offset="0" stop-color="#b0e4e8"/><stop offset=".15" stop-color="#d8d8d8"/><stop offset=".85" stop-color="#d8d8d8"/><stop offset="1" stop-color="#b0e4e8"/></linearGradient>
</defs>
<!-- bar display -->
<rect x="654" y="182.500" width="51" height="9.500" fill="url(#tbar)"/><rect x="654" y="191" width="51" height="1" fill="#8a8a8a"/>
<text x="662" y="190" font-family="Liberation Sans" font-size="6.500" fill="#000">0</text><text x="675" y="190" font-family="Liberation Sans" font-size="6.500" fill="#222">50</text><text x="690" y="190" font-family="Liberation Sans" font-size="6.500" fill="#000">100</text>
<!-- meter 90 -->
<path d="M786 207.500v-30h40a15.500 30 0 0 1 15.500 30z" fill="url(#tbez)"/>
<path d="M788 205.500v-26h36a15 26 0 0 1 15 26z" fill="url(#tface)"/>
<path d="M792 202.700L808 185" stroke="#fff" stroke-width="1"/><circle cx="792" cy="202.700" r="1.800" fill="#fff" stroke="#666" stroke-width=".6"/>
<path d="M822.500 183l6-2M824 186l6-1.500M825.500 189l6-1M826.500 192h6M827 195l6 .5M827 198l6 1M826.500 201l6 1.500" stroke="#f0f0f0" stroke-width="1.100"/>
<text x="804.500" y="186" font-family="Liberation Sans" font-size="4.500" fill="#fff">50.0</text><text x="813" y="204.500" font-family="Liberation Sans" font-size="4.500" fill="#e8e8e8">100.0</text><path d="M826 203h7" stroke="#ddd" stroke-width=".8"/>
<!-- meter 180 -->
<path d="M656 273v-1.500a26 26 0 0 1 52 0v1.500z" fill="url(#tbez)"/>
<path d="M658 271a24 24 0 0 1 48 0z" fill="url(#tface)"/>
<path d="M669 271a13 13 0 0 1 26 0z" fill="#8a8a8a" opacity=".8"/>
<path d="M664.5 270.0L661.0 270.0M665.4 264.6L662.0 263.5M667.8 259.7L665.0 257.7M671.7 255.8L669.7 253.0M676.6 253.4L675.5 250.0M682.0 252.5L682.0 249.0M687.4 253.4L688.5 250.0M692.3 255.8L694.3 253.0M696.2 259.7L699.0 257.7M698.6 264.6L702.0 263.5M699.5 270.0L703.0 270.0" stroke="#f4f4f4" stroke-width=".9"/>
<path d="M682 270v-20" stroke="#fff" stroke-width="1"/><circle cx="682" cy="270" r="1.500" fill="#eee" stroke="#444" stroke-width=".6"/>
<text x="677" y="261" font-family="Liberation Sans" font-size="4.500" fill="#fff">50.0</text><text x="665.500" y="271" font-family="Liberation Sans" font-size="4.500" fill="#eee">0.0</text><text x="688" y="271" font-family="Liberation Sans" font-size="4.500" fill="#eee">100.0</text>
<rect x="656" y="271.500" width="52" height="1.500" fill="#c8c8c8"/>
<!-- round meter -->
<circle cx="813.600" cy="273" r="27.600" fill="url(#tbez)"/>
<circle cx="813.600" cy="273" r="25.500" fill="url(#tface)"/>
<circle cx="813.600" cy="273" r="15" fill="#8a8a8a" opacity=".7"/>
<path d="M799.8 286.8L797.3 289.3M796.7 282.8L793.7 284.5M794.8 278.0L791.4 279.0M794.1 273.0L790.6 273.0M794.8 268.0L791.4 267.0M796.7 263.2L793.7 261.5M799.8 259.2L797.3 256.7M803.9 256.1L802.1 253.1M808.6 254.2L807.6 250.8M813.6 253.5L813.6 250.0M818.6 254.2L819.6 250.8M823.4 256.1L825.1 253.1M827.4 259.2L829.9 256.7M830.5 263.2L833.5 261.5M832.4 268.0L835.8 267.0M833.1 273.0L836.6 273.0M832.4 278.0L835.8 279.0M830.5 282.8L833.5 284.5M827.4 286.8L829.9 289.3" stroke="#f4f4f4" stroke-width=".9"/>
<path d="M813.600 273v-20" stroke="#fff" stroke-width="1"/><circle cx="813.600" cy="273" r="1.500" fill="#eee" stroke="#444" stroke-width=".6"/>
<text x="809" y="262.500" font-family="Liberation Sans" font-size="4.500" fill="#fff">50.0</text><text x="800" y="284.500" font-family="Liberation Sans" font-size="4.500" fill="#eee">0.0</text><text x="818" y="284.500" font-family="Liberation Sans" font-size="4.500" fill="#eee">100.0</text>
</svg>
</div>
<span class="t" style="left:654px;top:206px;font-size:11.5px;transform:scaleX(1.002);">Bar display</span>
<span class="t" style="left:790px;top:206px;font-size:11.5px;transform:scaleX(0.980);">Meter 90°</span>
<div class="a" style="left:964px;top:180px;width:16px;height:117px;background:#f0f0f0"></div>
<svg style="left:969px;top:189.5px" width="7" height="4" viewBox="0 0 9 5"><path d="M0 5L4.500 0L9 5z" fill="#404040"/></svg>
<div class="a" style="left:964px;top:210px;width:15px;height:33px;background:linear-gradient(90deg,#f8f8f8,#e8e8e8 50%,#d8d8d8 52%,#dedede);border:1px solid #9a9a9a;border-radius:2px;box-sizing:border-box"></div>
<div class="a" style="left:968px;top:223px;width:7px;height:1px;background:#444;box-shadow:0 2px 0 #444,0 4px 0 #444"></div>
<svg style="left:969px;top:285.5px" width="7" height="4" viewBox="0 0 9 5"><path d="M0 0L4.500 5L9 0z" fill="#404040"/></svg>
<!-- slider + search -->
<div class="a" style="left:626px;top:314px;width:87px;height:2px;background:#c8c8c8;border-top:1px solid #a8a8a8;box-sizing:border-box"></div>
<svg style="left:640px;top:307px" width="11" height="19" viewBox="0 0 11 19"><defs><linearGradient id="slg" x1="0" x2="1"><stop offset="0" stop-color="#f8f8f8"/><stop offset="1" stop-color="#d0d0d0"/></linearGradient></defs><path d="M.5 1.500q0-1 1-1h7q1 0 1 1v11.500l-4.500 5l-4.500-5z" fill="url(#slg)" stroke="#8a8a8a"/></svg>
<div class="a" style="left:722px;top:305px;width:19px;height:20px;background:#a9a9a9"></div>
<svg style="left:725px;top:308px" width="14" height="14" viewBox="0 0 14 14"><circle cx="5.500" cy="5.500" r="3.800" fill="#d8d8d8" stroke="#fff" stroke-width="1.500"/><path d="M8.500 8.500L12.500 12.500" stroke="#fff" stroke-width="2"/></svg>
<div class="a" style="left:741px;top:305px;width:169px;height:20px;background:#fff;border:1px solid #dcdcdc;border-left:none;box-sizing:border-box"></div>
<span class="t" style="left:946px;top:306px;font-size:11.5px;transform:scaleX(0.944);">6 items</span>
<!-- properties panel -->
<div class="a" style="left:614px;top:333px;width:370px;height:4px;background:#fafafa"></div><div class="a" style="left:614px;top:337px;width:370px;height:1px;background:#9c9c9c"></div><div class="a" style="left:614px;top:338px;width:370px;height:17px;background:#bfcddb"></div>
<span class="t" style="left:620px;top:338px;font-size:11.5px;transform:scaleX(0.916);color:#3a4652">Properties</span>
<svg style="left:947px;top:345.500px" width="9" height="5" viewBox="0 0 10 6"><path d="M0 0h9L4.500 5z" fill="#333"/></svg>
<svg style="left:967.500px;top:341px" width="10" height="12" viewBox="0 0 10 12"><path d="M2.500 1.500h5M3.500 1.500v5M6.500 1.500v5M7.500 2v4.500M1.500 6.500h7M5 7v4" stroke="#222" stroke-width="1" fill="none"/></svg>
<div class="a" style="left:614px;top:355px;width:370px;height:24px;background:linear-gradient(#fefefe,#f6f6f6 50%,#ececec)"></div>
<svg style="left:622px;top:362px" width="11" height="11" viewBox="0 0 11 11"><path d="M.800 1h9.400L6.200 5.500V10L4.800 10V5.500z" fill="#fff" stroke="#333" stroke-width="1"/></svg>
<span class="t" style="left:637px;top:359.5px;font-size:11.5px;transform:scaleX(0.919);">Filter</span>
<svg style="left:668px;top:366.5px" width="5.500" height="3.200" viewBox="0 0 7 4"><path d="M0 0h7L3.500 4z" fill="#111"/></svg>
<div class="a" style="left:680px;top:360px;width:1px;height:15px;background:#b8b8b8"></div>
<svg style="left:689px;top:360px" width="13" height="14" viewBox="0 0 13 14"><path d="M1 2l4 3.500l-4 3.500z" fill="#1030c0"/><path d="M9.500 .500l2.200 1.800l-3.200 3.200l-2.200-1.800z" fill="#20e0d8" stroke="#103030" stroke-width=".8"/><path d="M9.500 7.500l2.200 1.800l-3.200 3.200l-2.200-1.800z" fill="#20e0d8" stroke="#103030" stroke-width=".8"/></svg>
<span class="t" style="left:704.5px;top:359.5px;font-size:11.5px;transform:scaleX(0.933);">Sort by</span>
<svg style="left:746px;top:366.5px" width="5.500" height="3.200" viewBox="0 0 7 4"><path d="M0 0h7L3.500 4z" fill="#111"/></svg>
<span class="t" style="left:759px;top:356px;font-size:9.500px;font-weight:bold;color:#2030c0;line-height:10px;height:10px">A</span>
<span class="t" style="left:759px;top:365px;font-size:9.500px;font-weight:bold;color:#a01020;line-height:10px;height:10px">Z</span>
<svg style="left:766.500px;top:358px" width="7" height="17" viewBox="0 0 7 17"><path d="M3.500 0v13" stroke="#222" stroke-width="1.300"/><path d="M.5 11.500L3.500 16L6.500 11.500z" fill="#222"/></svg>
<span class="t" style="left:775.5px;top:359.5px;font-size:11.5px;transform:scaleX(0.939);">Sort order</span>
<svg style="left:831px;top:366.5px" width="5.500" height="3.200" viewBox="0 0 7 4"><path d="M0 0h7L3.500 4z" fill="#111"/></svg>
<div class="a" style="left:844px;top:361px;width:13px;height:13px;background:#fff;border:1px solid #3c5a8c;box-sizing:border-box"></div>
<svg style="left:846px;top:363px" width="9" height="9" viewBox="0 0 9 9"><path d="M1 4.500L3.500 7.500L8 1" stroke="#18a018" stroke-width="1.800" fill="none"/></svg>
<span class="t" style="left:860px;top:359.5px;font-size:11.5px;transform:scaleX(0.962);">Expert</span>
<!-- grid -->
<div class="a" style="left:614px;top:379px;width:369px;height:168px;background:#f0f0f0;border:1px solid #828790;box-sizing:border-box"></div>
<div class="a" style="left:615px;top:380px;width:351px;height:151px;background:#fff;overflow:hidden">
 <div class="a" style="left:0;top:0;width:351px;height:22px;background:linear-gradient(#fff 0,#fff 45%,#f2f2f2 50%,#f6f6f6 100%);border-bottom:1px solid #d5d5d5;box-sizing:border-box"></div>
 <div class="a" style="left:19px;top:23px;width:332px;height:19px;background:#f0f0f0"></div>
 <div class="a" style="left:0;top:42px;width:351px;height:1px;background:#dcdcdc"></div>
 <div class="a" style="left:0;top:61px;width:351px;height:1px;background:#dcdcdc"></div>
 <div class="a" style="left:0;top:80px;width:351px;height:1px;background:#dcdcdc"></div>
 <div class="a" style="left:19px;top:81px;width:332px;height:19px;background:#dcdcdc"></div>
 <div class="a" style="left:0;top:100px;width:351px;height:1px;background:#dcdcdc"></div>
 <div class="a" style="left:0;top:119px;width:351px;height:1px;background:#dcdcdc"></div>
 <div class="a" style="left:0;top:138px;width:351px;height:1px;background:#dcdcdc"></div>
 <div class="a" style="left:257px;top:0;width:1px;height:81px;background:#dcdcdc"></div>
 <div class="a" style="left:257px;top:100px;width:1px;height:60px;background:#dcdcdc"></div>
 <div class="a" style="left:5px;top:85px;width:9px;height:9px;border:1px solid #8a8a8a;border-radius:2px;background:linear-gradient(#fff,#d8d8d8);box-sizing:border-box"></div>
 <div class="a" style="left:7px;top:89px;width:5px;height:1px;background:#222"></div>
</div>
<span class="t" style="left:621px;top:383.5px;font-size:12px;transform:scaleX(0.992);">Property</span>
<span class="t" style="left:877px;top:383.5px;font-size:12px;transform:scaleX(0.990);">Value</span>
<span class="t" style="left:639px;top:405.5px;font-size:11.5px;transform:scaleX(0.909);">Elementname</span>
<span class="t" style="left:877px;top:405.5px;font-size:11.5px;transform:scaleX(0.908);">GenElemInst_6</span>
<span class="t" style="left:639px;top:424.5px;font-size:11.5px;transform:scaleX(0.959);">Type of element</span>
<span class="t" style="left:877px;top:424.5px;font-size:11.5px;transform:scaleX(0.950);">Potentiometer</span>
<span class="t" style="left:639px;top:443.5px;font-size:11.5px;transform:scaleX(0.931);">Variable</span>
<span class="t" style="left:877px;top:443.5px;font-size:11.5px;transform:scaleX(0.909);">TempSoll</span>
<span class="t" style="left:637px;top:462.5px;font-size:11.5px;transform:scaleX(0.977);">Position</span>
<span class="t" style="left:659px;top:481.5px;font-size:11.5px;transform:scaleX(0.782);">X</span>
<span class="t" style="left:877px;top:481.5px;font-size:11.5px;transform:scaleX(0.938);">283</span>
<span class="t" style="left:659px;top:500.5px;font-size:11.5px;transform:scaleX(0.782);">Y</span>
<span class="t" style="left:877px;top:500.5px;font-size:11.5px;transform:scaleX(0.938);">84</span>
<div class="a" style="left:615px;top:519px;width:351px;height:12px;overflow:hidden">
<span class="t" style="left:44px;top:0.5px;font-size:11px;transform:scaleX(.95)">Width</span>
<span class="t" style="left:262px;top:0.5px;font-size:11px;transform:scaleX(.98)">131</span>
</div>
<!-- grid scrollbars -->
<svg style="left:971px;top:387.5px" width="7" height="4" viewBox="0 0 9 5"><path d="M0 5L4.500 0L9 5z" fill="#404040"/></svg>
<div class="a" style="left:967px;top:398px;width:15px;height:42px;background:linear-gradient(90deg,#f8f8f8,#e8e8e8 50%,#d8d8d8 52%,#dedede);border:1px solid #9a9a9a;border-radius:2px;box-sizing:border-box"></div>
<div class="a" style="left:971px;top:415px;width:7px;height:1px;background:#444;box-shadow:0 2px 0 #444,0 4px 0 #444,0 6px 0 #444"></div>
<svg style="left:971px;top:518.5px" width="7" height="4" viewBox="0 0 9 5"><path d="M0 0L4.500 5L9 0z" fill="#404040"/></svg>
<svg style="left:620.5px;top:535px" width="4" height="7" viewBox="0 0 5 9"><path d="M5 0L0 4.500L5 9z" fill="#303030"/></svg>
<div class="a" style="left:632px;top:532px;width:301px;height:14px;background:linear-gradient(#f6f6f6,#e6e6e6 50%,#d6d6d6 52%,#dcdcdc);border:1px solid #9a9a9a;border-radius:2px;box-sizing:border-box"></div>
<div class="a" style="left:780px;top:535px;width:1px;height:7px;background:#444;box-shadow:2px 0 0 #444,4px 0 0 #444"></div>
<svg style="left:955.5px;top:535px" width="4" height="7" viewBox="0 0 5 9"><path d="M0 0L5 4.500L0 9z" fill="#303030"/></svg>
<!-- description -->
<div class="a" style="left:615px;top:554px;width:368px;height:57px;background:#f0f0f0;border:1px solid #c3d3e3;border-radius:4px;box-sizing:border-box"></div>
<span class="t" style="left:619.5px;top:555px;font-size:11.5px;transform:scaleX(0.999);">This property contains the name of the instance that will represent the</span>
<span class="t" style="left:619.5px;top:568px;font-size:11.5px;transform:scaleX(0.989);">selected visual element in the visualization.</span>
<!-- dropdown menu -->
<div class="a" style="left:17px;top:23px;width:181px;height:291px;background:#fbfbfb;border:1px solid #979797;box-sizing:border-box;box-shadow:2px 2px 3px rgba(0,0,0,.25)"></div>
<div class="a" style="left:18px;top:24px;width:71px;height:1px;background:#fbfbfb"></div>
<div class="a" style="left:18px;top:24px;width:24px;height:289px;background:linear-gradient(90deg,#f6f6f6,#ececec 60%,#f4f4f4)"></div>
<div class="a" style="left:50px;top:49px;width:146px;height:1px;background:#e0e0e0"></div>
<div class="a" style="left:50px;top:121px;width:146px;height:1px;background:#e0e0e0"></div>
<div class="a" style="left:50px;top:192px;width:146px;height:1px;background:#e0e0e0"></div>
<div class="a" style="left:50px;top:242px;width:146px;height:1px;background:#e0e0e0"></div>
<span class="t" style="left:50px;top:28px;font-size:11.5px;transform:scaleX(0.943);"><u>C</u>reate Global Text List</span>
<span class="t" style="left:50.5px;top:54px;font-size:11.5px;transform:scaleX(0.968);"><u>I</u>nterface Editor</span>
<span class="t" style="left:50.5px;top:77px;font-size:11.5px;transform:scaleX(0.929);"><u>H</u>otkeys Editor</span>
<span class="t" style="left:50.5px;top:100px;font-size:11.5px;transform:scaleX(0.898);"><u>V</u>isual Element List Editor</span>
<span class="t" style="left:50.5px;top:126px;font-size:11.5px;transform:scaleX(0.953);"><u>A</u>ctivate keyboard usage</span>
<span class="t" style="left:50.5px;top:149px;font-size:11.5px;transform:scaleX(0.935);"><u>O</u>rder</span>
<span class="t" style="left:50.5px;top:172px;font-size:11.5px;transform:scaleX(0.929);">A<u>l</u>ignment</span>
<span class="t" style="left:50.5px;top:198px;font-size:11.5px;transform:scaleX(0.891);color:#6d6d6d"><u>G</u>roup</span>
<span class="t" style="left:50.5px;top:221px;font-size:11.5px;transform:scaleX(0.918);color:#6d6d6d"><u>U</u>ngroup</span>
<span class="t" style="left:50.5px;top:247px;font-size:11.5px;transform:scaleX(0.901);color:#6d6d6d"><u>F</u>rame Selection</span>
<span class="t" style="left:50.5px;top:270px;font-size:11.5px;transform:scaleX(0.912);"><u>B</u>ackground</span>
<span class="t" style="left:50.5px;top:293px;font-size:11.5px;transform:scaleX(0.927);color:#6d6d6d"><u>M</u>ultiply visu element</span>
<svg style="left:184px;top:153px" width="5" height="8" viewBox="0 0 5 8"><path d="M0 0L4.500 4L0 8z" fill="#000"/></svg>
<svg style="left:184px;top:176px" width="5" height="8" viewBox="0 0 5 8"><path d="M0 0L4.500 4L0 8z" fill="#000"/></svg>
<!-- checked icon frames -->
<div class="a" style="left:20px;top:98px;width:20px;height:20px;background:#e6f0fa;border:1px solid #5ea0e6;box-sizing:border-box"></div>
<div class="a" style="left:20px;top:124px;width:20px;height:20px;background:#e6f0fa;border:1px solid #5ea0e6;box-sizing:border-box"></div>
<!--MENUICONS-->
<svg style="left:0;top:0" width="60" height="320">
<!-- 1 global text list -->
<path d="M25.500 28.500h7l3 3v10h-10z" fill="#fff" stroke="#222" stroke-width="1"/><path d="M26 42.500h10v-10" fill="none" stroke="#000" stroke-width="1.200"/>
<rect x="21.500" y="32" width="4" height="6" fill="#108888"/><path d="M27.500 32.500h5M27.500 34.500h3" stroke="#888" stroke-width="1"/>
<circle cx="32" cy="38" r="3.800" fill="#2a62d8"/><path d="M30 36q2-1 3 1q1 2-1 3q-2 0-2-2z" fill="#38c048"/>
<!-- 2 interface editor -->
<rect x="24.500" y="55.500" width="12" height="9" fill="#fff" stroke="#111" stroke-width="1.100"/><path d="M30 58.500h5M30 60.500h5M30 62.500h4" stroke="#222" stroke-width="1"/>
<circle cx="26.500" cy="59.500" r="3.600" fill="#b8f0f8" stroke="#18a0c0" stroke-width="1.200"/><path d="M29.500 62.500l5.500 5" stroke="#2040c8" stroke-width="2.400" stroke-linecap="round"/>
<!-- 3 hotkeys editor -->
<rect x="22.500" y="79.500" width="14" height="9" rx="1.500" fill="#9a9a9a" stroke="#222" stroke-width="1.100"/><path d="M30 82.500h5M30 85h5" stroke="#ddd" stroke-width="1"/>
<circle cx="26.500" cy="83.500" r="3.600" fill="#b8f0f8" stroke="#18a0c0" stroke-width="1.200"/><path d="M29.500 86.500l5.500 5" stroke="#2040c8" stroke-width="2.400" stroke-linecap="round"/>
<!-- 4 visual element list -->
<rect x="23" y="102" width="14" height="12" fill="#e8e8e8" stroke="#10186a" stroke-width="1"/><rect x="23" y="102" width="14" height="3" fill="#10186a"/>
<rect x="24" y="105.500" width="3" height="2.500" fill="#e01818"/><rect x="24" y="108.500" width="3" height="2.500" fill="#e8d010"/><rect x="24" y="111.500" width="3" height="2" fill="#18a028"/>
<path d="M28.500 105v9M32.500 105v9M27 108h10M27 111h10" stroke="#555" stroke-width=".8"/>
<!-- 5 keyboard -->
<rect x="23.500" y="128.500" width="14" height="11" rx="2" fill="#a4a4a4" stroke="#222" stroke-width="1.200"/><path d="M26 131.500h9M26 133.500h9" stroke="#e8e8e8" stroke-width="1" stroke-dasharray="1 1"/><path d="M27 136h7" stroke="#e0e0e0" stroke-width="1"/>
<!-- group disabled -->
<g fill="none" stroke="#c4c4c4"><rect x="23.500" y="199.500" width="13" height="13" stroke-dasharray="2 1"/><rect x="26.500" y="201.500" width="4" height="8" fill="#dcdcdc"/><ellipse cx="32" cy="208.500" rx="3.500" ry="2.500" fill="#c8c8c8" stroke="none"/>
<rect x="23.500" y="222.500" width="13" height="13" stroke-dasharray="2 1"/><rect x="26.500" y="224.500" width="4" height="8" fill="#dcdcdc"/><ellipse cx="32" cy="231.500" rx="3.500" ry="2.500" fill="#c8c8c8" stroke="none"/><path d="M32 221.500l4 4M36 221.500l-4 4" stroke="#ccc"/></g>
<!-- background -->
<rect x="23.500" y="271.500" width="12" height="12" fill="#f4e060" stroke="#222" stroke-width="1"/><path d="M24 271h4l-2-2.500z" fill="#e02020"/><rect x="24" y="270.500" width="9" height="1.500" fill="#2030c0"/><circle cx="32" cy="275" r="1.500" fill="#f8f8a0" stroke="#555" stroke-width=".6"/><path d="M24 283v-4l3-3l4 4v3z" fill="#909090"/><rect x="29" y="278.500" width="7" height="2.500" fill="#18c018" stroke="#111" stroke-width=".6"/><rect x="29" y="281.500" width="7" height="2.500" fill="#1828d0" stroke="#111" stroke-width=".6"/>
<!-- multiply disabled -->
<rect x="22" y="293" width="7" height="6" fill="#d4d4d4"/><rect x="30" y="293" width="7" height="6" fill="#dcdcdc"/><rect x="22" y="300" width="7" height="6" fill="#dcdcdc"/><path d="M33.500 299v9M29 303.500h9" stroke="#c0c0c0" stroke-width="2.400"/>
</svg>
<!-- outer borders -->
<div class="a" style="left:0;top:0;width:987px;height:1px;background:#000"></div>
<div class="a" style="left:0;top:0;width:1px;height:614px;background:#000"></div>
<div class="a" style="left:1px;top:0;width:1px;height:614px;background:rgba(0,0,0,.35)"></div>
<div class="a" style="left:0;top:612px;width:987px;height:2px;background:#000"></div>
<div class="a" style="left:984px;top:1px;width:3px;height:611px;background:#fff"></div>
<div class="a" style="left:984px;top:1px;width:1.5px;height:611px;background:#4a6482"></div>
<div class="a" style="left:985.5px;top:1px;width:1px;height:611px;background:#d0dae6"></div>

<!-- annotations -->
<div class="an" style="left:-0.45px;top:2.95px;font-family:'Liberation Serif',serif;font-size:13.5px"><svg width="24" height="24"><circle cx="11.75" cy="11.75" r="11" fill="#fff" stroke="#bf0a14" stroke-width="1.600"/></svg><span style="left:-.7px">4</span></div>
<div class="an" style="left:229.95px;top:87.75px"><svg width="24" height="24"><circle cx="11.75" cy="11.75" r="11" fill="#fff" stroke="#bf0a14" stroke-width="1.600"/></svg><span>5</span></div>
<div class="an" style="left:358.75px;top:87.65px"><svg width="24" height="24"><circle cx="11.75" cy="11.75" r="11" fill="#fff" stroke="#bf0a14" stroke-width="1.600"/></svg><span>6</span></div>
<div class="an" style="left:473.95px;top:85.75px"><svg width="24" height="24"><circle cx="11.75" cy="11.75" r="11" fill="#fff" stroke="#bf0a14" stroke-width="1.600"/></svg><span>7</span></div>
<div class="an" style="left:750.95px;top:75.05px"><svg width="24" height="24"><circle cx="11.75" cy="11.75" r="11" fill="#fff" stroke="#bf0a14" stroke-width="1.600"/></svg><span>2</span></div>
<div class="an" style="left:677.75px;top:333.75px"><svg width="24" height="24"><circle cx="11.75" cy="11.75" r="11" fill="#fff" stroke="#bf0a14" stroke-width="1.600"/></svg><span>3</span></div>
<div class="an" style="left:203.95px;top:385.75px"><svg width="24" height="24"><circle cx="11.75" cy="11.75" r="11" fill="#fff" stroke="#bf0a14" stroke-width="1.600"/></svg><span>1</span></div>

</body></html>
